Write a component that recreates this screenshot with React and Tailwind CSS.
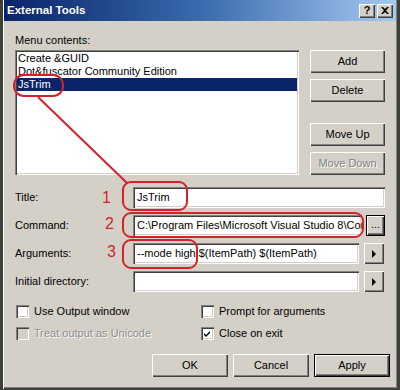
import React from "react";

const raised =
  "shadow-[inset_1px_1px_0_#ffffff,inset_-1px_-1px_0_#404040,inset_-2px_-2px_0_#808080]";
const sunken =
  "shadow-[inset_1px_1px_0_#808080,inset_2px_2px_0_#404040,inset_-1px_-1px_0_#ffffff,inset_-2px_-2px_0_#d4d0c8]";

function Btn({ children, w = "w-[75px]", disabled, def }) {
  return (
    <div
      className={`flex items-center justify-center h-[23px] bg-[#d4d0c8] ${w} ${
        def
          ? "border border-black shadow-[inset_1px_1px_0_#ffffff,inset_-1px_-1px_0_#404040,inset_-2px_-2px_0_#808080]"
          : raised
      } ${disabled ? "text-[#808080] [text-shadow:1px_1px_0_#ffffff]" : "text-black"}`}
    >
      {children}
    </div>
  );
}

function Arrow() {
  return (
    <div className={`flex items-center justify-center w-[20px] h-[21px] bg-[#d4d0c8] ${raised}`}>
      <svg width="5" height="8" viewBox="0 0 5 8">
        <path d="M0 0 L4 4 L0 8 Z" fill="#000" />
      </svg>
    </div>
  );
}

function Check({ checked, disabled, label }) {
  return (
    <div className="flex items-center h-[13px]">
      <div
        className={`w-[13px] h-[13px] ${disabled ? "bg-[#d4d0c8]" : "bg-white"} ${sunken} flex items-center justify-center`}
      >
        {checked && (
          <svg width="9" height="9" viewBox="0 0 9 9">
            <path d="M1 4 L3 6 L7 2 L7 4 L3 8 L1 6 Z" fill="#000" />
          </svg>
        )}
      </div>
      <span
        className={`ml-[5px] ${disabled ? "text-[#8c8c8c] [text-shadow:1px_1px_0_#ffffff]" : "text-black"}`}
      >
        {label}
      </span>
    </div>
  );
}

function Field({ text, wClass }) {
  return (
    <div className={`h-[21px] bg-white ${sunken} ${wClass} pl-[4px] pr-[2px] flex items-center overflow-hidden whitespace-nowrap`}>
      {text}
    </div>
  );
}

export default function App() {
  return (
    <div className="relative w-[400px] h-[390px] bg-[#3b4136] overflow-hidden font-['Liberation_Sans',Arial,sans-serif] text-[11px] text-black leading-[13px]">
      <div className="ml-[3px] w-[395px] h-[389px] bg-[#d4d0c8] pl-[1px] pr-[2px] flex flex-col shadow-[inset_1px_0_0_#ffffff,inset_-1px_-1px_0_#404040,inset_-2px_-2px_0_#808080]">
        {/* title bar */}
        <div className="h-[21px] bg-gradient-to-r from-[#0a246a] via-[#3a6aae] to-[#a6caf0] flex items-center pl-[3px] pr-[3px]">
          <span className="text-white font-bold text-[11.5px]">External Tools</span>
          <div className="ml-auto flex gap-[2px]">
            <div className={`w-[16px] h-[14px] bg-[#d4d0c8] ${raised} flex items-center justify-center font-bold text-[11px] leading-none`}>?</div>
            <div className={`w-[16px] h-[14px] bg-[#d4d0c8] ${raised} flex items-center justify-center`}>
              <svg width="8" height="7" viewBox="0 0 8 7">
                <path d="M0 0 L2 0 L4 2 L6 0 L8 0 L5 3.5 L8 7 L6 7 L4 5 L2 7 L0 7 L3 3.5 Z" fill="#000" />
              </svg>
            </div>
          </div>
        </div>

        <div className="flex flex-col pl-[11px] pr-[11px] pt-[12px]">
          <div className="h-[14px] flex items-center">Menu contents:</div>

          <div className="flex mt-[3px]">
            <div className={`w-[284px] h-[125px] bg-white ${sunken} p-[2px] flex flex-col`}>
              <div className="h-[13px] pl-[1px] flex items-center">Create &amp;GUID</div>
              <div className="h-[13px] pl-[1px] flex items-center">Dot&amp;fuscator Community Edition</div>
              <div className="h-[13px] pl-[1px] flex items-center bg-[#0a246a] text-white">JsTrim</div>
            </div>
            <div className="ml-[11px] flex flex-col">
              <Btn>Add</Btn>
              <div className="mt-[6px]"><Btn>Delete</Btn></div>
              <div className="mt-[21px]"><Btn>Move Up</Btn></div>
              <div className="mt-[6px]"><Btn disabled>Move Down</Btn></div>
            </div>
          </div>

          <div className="flex flex-col gap-[7px] mt-[12px]">
            <div className="flex items-center">
              <div className="w-[118px]">Title:</div>
              <Field text="JsTrim" wClass="w-[252px]" />
            </div>
            <div className="flex items-center">
              <div className="w-[118px]">Command:</div>
              <Field text="C:\Program Files\Microsoft Visual Studio 8\Common7\IDE\JsTrim.exe" wClass="w-[229px]" />
              <div className={`ml-[4px] w-[19px] h-[21px] bg-[#d4d0c8] border border-black ${raised} flex items-center justify-center pb-[3px]`}>...</div>
            </div>
            <div className="flex items-center">
              <div className="w-[118px]">Arguments:</div>
              <Field text="--mode high $(ItemPath) $(ItemPath)" wClass="w-[226px]" />
              <div className="ml-[5px]"><Arrow /></div>
            </div>
            <div className="flex items-center">
              <div className="w-[118px]">Initial directory:</div>
              <Field text="" wClass="w-[226px]" />
              <div className="ml-[5px]"><Arrow /></div>
            </div>
          </div>

          <div className="grid grid-cols-[185px_1fr] gap-y-[9px] mt-[13px] pl-[1px]">
            <Check label="Use Output window" />
            <Check label="Prompt for arguments" />
            <Check label="Treat output as Unicode" disabled />
            <Check label="Close on exit" checked />
          </div>

          <div className="flex justify-end gap-[5px] mt-[14px] -mr-[5px]">
            <Btn w="w-[76px]">OK</Btn>
            <Btn w="w-[76px]">Cancel</Btn>
            <Btn w="w-[76px]" def>Apply</Btn>
          </div>
        </div>
      </div>

      {/* red annotations */}
      <svg className="absolute inset-0 pointer-events-none" width="400" height="390" viewBox="0 0 400 390">
        <g fill="none" stroke="#d3222a" strokeWidth="2">
          <rect x="14" y="75" width="49" height="21" rx="10" />
          <line x1="38" y1="97" x2="127" y2="183" />
          <rect x="123" y="182" width="64" height="28" rx="8" />
          <rect x="123" y="213" width="240" height="24" rx="8" />
          <rect x="123" y="240" width="74" height="28" rx="8" />
        </g>
        <g fill="#d3222a" fontFamily="Liberation Sans, Arial, sans-serif" fontSize="16">
          <text x="102" y="203">1</text>
          <text x="105" y="229">2</text>
          <text x="107" y="257">3</text>
        </g>
      </svg>
    </div>
  );
}
